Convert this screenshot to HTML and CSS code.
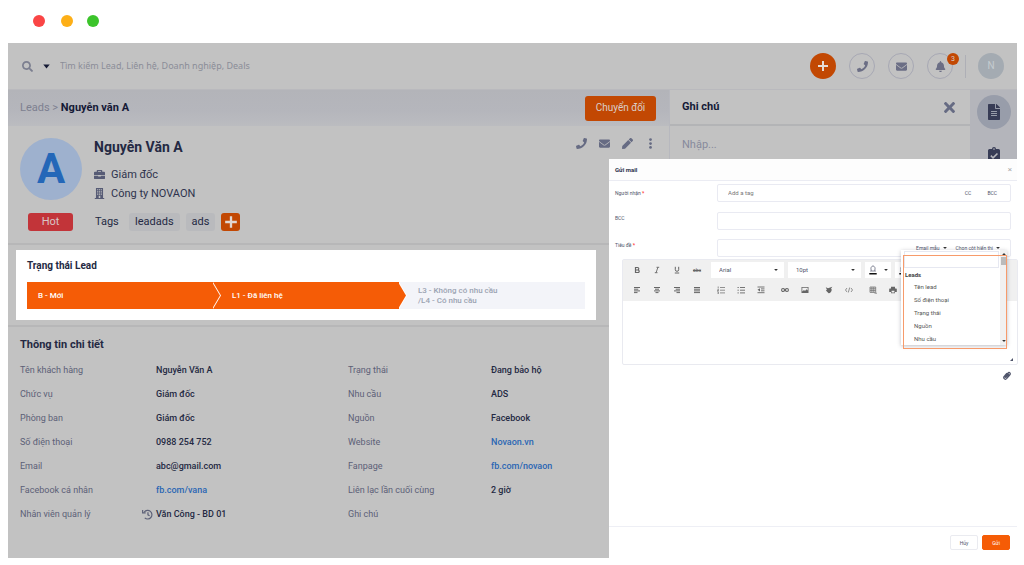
FILE: index.html
```html
<!DOCTYPE html>
<html lang="vi">
<head>
<meta charset="utf-8">
<meta name="viewport" content="width=device-width, initial-scale=1">
<title>Nguyễn Văn A - Leads</title>
<link rel="stylesheet" href="styles.css">
</head>
<body>
<svg class="sprite" aria-hidden="true">
  <symbol id="search" viewBox="0 0 512 512"><path d="M505 442.7L405.3 343c-4.5-4.5-10.6-7-17-7H372c27.6-35.3 44-79.7 44-128C416 93.1 322.9 0 208 0S0 93.1 0 208s93.1 208 208 208c48.3 0 92.7-16.4 128-44v16.3c0 6.4 2.5 12.5 7 17l99.7 99.7c9.4 9.4 24.6 9.4 33.9 0l28.3-28.3c9.4-9.4 9.4-24.6.1-34zM208 336c-70.7 0-128-57.2-128-128 0-70.7 57.2-128 128-128 70.7 0 128 57.2 128 128 0 70.7-57.2 128-128 128z"/></symbol>
  <symbol id="phone" viewBox="0 0 512 512"><path d="M493.4 24.6l-104-24c-11.3-2.6-22.9 3.3-27.5 13.9l-48 112c-4.2 9.8-1.4 21.3 6.9 28l60.6 49.6c-36 76.7-98.9 140.5-177.2 177.2l-49.6-60.6c-6.8-8.3-18.2-11.1-28-6.9l-112 48C3.9 366.5-2 378.1.6 389.4l24 104C27.1 504.2 36.7 512 48 512c256.1 0 464-207.5 464-464 0-11.2-7.7-20.9-18.6-23.4z"/></symbol>
  <symbol id="mail" viewBox="0 0 512 512"><path d="M502.3 190.8c3.9-3.1 9.7-.2 9.7 4.7V400c0 26.5-21.5 48-48 48H48c-26.5 0-48-21.5-48-48V195.6c0-5 5.7-7.8 9.7-4.7 22.4 17.4 52.1 39.5 154.1 113.6 21.1 15.4 56.7 47.8 92.2 47.6 35.7.3 72-32.8 92.3-47.6 102-74.1 131.6-96.3 154-113.7zM256 320c23.2.4 56.6-29.2 73.4-41.4 132.7-96.3 142.8-104.7 173.4-128.7 5.8-4.5 9.2-11.5 9.2-18.9v-19c0-26.5-21.5-48-48-48H48c-26.5 0-48 21.5-48 48v19c0 7.4 3.4 14.3 9.2 18.9 30.6 23.9 40.7 32.4 173.4 128.7 16.8 12.2 50.2 41.8 73.4 41.4z"/></symbol>
  <symbol id="bell" viewBox="0 0 448 512"><path d="M224 512c35.32 0 63.97-28.65 63.97-64H160.03c0 35.35 28.65 64 63.97 64zm215.39-149.71c-19.32-20.76-55.47-51.99-55.47-154.29 0-77.7-54.48-139.9-127.94-155.16V32c0-17.67-14.32-32-31.98-32s-31.98 14.33-31.98 32v20.84C118.56 68.1 64.08 130.3 64.08 208c0 102.3-36.15 133.53-55.47 154.29-6 6.45-8.66 14.16-8.61 21.71.11 16.4 12.98 32 32.1 32h383.8c19.12 0 32-15.6 32.1-32 .05-7.55-2.61-15.27-8.61-21.71z"/></symbol>
  <symbol id="times" viewBox="0 80 352 352"><path d="M242.72 256l100.07-100.07c12.28-12.28 12.28-32.19 0-44.48l-22.24-22.24c-12.28-12.28-32.19-12.28-44.48 0L176 189.28 75.93 89.21c-12.28-12.28-32.19-12.28-44.48 0L9.21 111.45c-12.28 12.28-12.28 32.19 0 44.48L109.28 256 9.21 356.07c-12.28 12.28-12.28 32.19 0 44.48l22.24 22.24c12.28 12.28 32.2 12.28 44.48 0L176 322.72l100.07 100.07c12.28 12.28 32.2 12.28 44.48 0l22.24-22.24c12.28-12.28 12.28-32.19 0-44.48L242.72 256z"/></symbol>
  <symbol id="pen" viewBox="0 0 512 512"><path d="M290.74 93.24l128.02 128.02-277.99 277.99-114.14 12.6C11.35 513.54-1.56 500.62.14 485.34l12.7-114.22 277.9-277.88zm207.2-19.06l-60.11-60.11c-18.75-18.75-49.16-18.75-67.91 0l-56.55 56.55 128.02 128.02 56.55-56.55c18.75-18.76 18.75-49.16 0-67.91z"/></symbol>
  <symbol id="file" viewBox="0 0 384 512"><path d="M224 136V0H24C10.700 0 0 10.700 0 24v464c0 13.300 10.700 24 24 24h336c13.300 0 24-10.700 24-24V160H248c-13.200 0-24-10.800-24-24zm64 236c0 6.600-5.400 12-12 12H108c-6.600 0-12-5.400-12-12v-8c0-6.600 5.400-12 12-12h168c6.600 0 12 5.400 12 12v8zm0-64c0 6.600-5.400 12-12 12H108c-6.600 0-12-5.400-12-12v-8c0-6.600 5.400-12 12-12h168c6.600 0 12 5.400 12 12v8zm0-72v8c0 6.600-5.400 12-12 12H108c-6.600 0-12-5.400-12-12v-8c0-6.600 5.400-12 12-12h168c6.600 0 12 5.400 12 12zm96-114.100v6.100H256V0h6.100c6.400 0 12.500 2.500 17 7l97.900 98c4.500 4.500 7 10.600 7 16.900z"/></symbol>
  <symbol id="clipboard" viewBox="0 0 12 16"><path fill-rule="evenodd" d="M1.500 2H4a2 2 0 0 1 4 0h2.500Q12 2 12 3.500v11Q12 16 10.500 16h-9Q0 16 0 14.500v-11Q0 2 1.500 2zM6 1.300a.8.8 0 1 0 0 1.600.8.8 0 0 0 0-1.600zM2.300 9.200L5 12l5-5-1.100-1.100L5 9.800 3.400 8.100z"/></symbol>
  <symbol id="plus" viewBox="0 0 12 12"><path d="M5 1h2v4h4v2H7v4H5V7H1V5h4z"/></symbol>
  <symbol id="more" viewBox="0 0 4 12"><circle cx="2" cy="1.700" r="1.500"/><circle cx="2" cy="6" r="1.500"/><circle cx="2" cy="10.300" r="1.500"/></symbol>
  <symbol id="case" viewBox="0 0 12 12"><path fill-rule="evenodd" d="M3 3V1.700Q3 1 3.700 1h4.600Q9 1 9 1.700V3h2q1 0 1 1v2.500H0V4q0-1 1-1zm1.400 0h3.200v-.7H4.400zM0 7.300h4.500v1h3v-1H12V10q0 1-1 1H1q-1 0-1-1z"/></symbol>
  <symbol id="building" viewBox="0 0 12 14"><path fill-rule="evenodd" d="M1.500 0h9v12.800H12V14H0v-1.200h1.500zM3 1.500V3h1.400V1.500zm2.300 0V3h1.400V1.500zm2.300 0V3H9V1.500zM3 4.200v1.500h1.400V4.200zm2.300 0v1.500h1.400V4.200zm2.300 0v1.500H9V4.200zM3 7v1.500h1.400V7zm2.300 0v1.500h1.400V7zm2.300 0v1.500H9V7zM5 10v2.800h2V10z"/></symbol>
  <symbol id="history" viewBox="0 0 12 12"><path d="M2.500 3.200A4.700 4.700 0 1 1 3 9.700M.7 1v3.200H4M6.500 3.600v2.800l1.800 1" fill="none" stroke="currentColor" stroke-width="1.300"/></symbol>
  <symbol id="caret" viewBox="0 0 8 5"><path d="M.3.300h7.400L4 4.700z"/></symbol>
  <symbol id="bold" viewBox="0 0 8 8"><path d="M2.500 1.500h2q1.300 0 1.300 1.200T4.500 4h-2zm0 2.500h2.300q1.400 0 1.400 1.300T4.800 6.500H2.500z" fill="none" stroke="currentColor" stroke-width="1.200"/></symbol>
  <symbol id="italic" viewBox="0 0 8 8"><path d="M3.500 1.300h2.700M1.800 6.700h2.700M4.900 1.300L3.100 6.700" fill="none" stroke="currentColor" stroke-width=".9"/></symbol>
  <symbol id="underline" viewBox="0 0 8 8"><path d="M2.300.8v2.900q0 1.600 1.700 1.600t1.700-1.600V.8M1.800 7h4.400" fill="none" stroke="currentColor" stroke-width="1"/></symbol>
  <symbol id="left" viewBox="0 0 8 8"><path d="M1 1.500h6M1 3.200h4.300M1 4.900h6M1 6.600h3.500" fill="none" stroke="currentColor"/></symbol>
  <symbol id="center" viewBox="0 0 8 8"><path d="M1 1.500h6M2 3.200h4M1 4.900h6M2.500 6.600h3" fill="none" stroke="currentColor"/></symbol>
  <symbol id="right" viewBox="0 0 8 8"><path d="M1 1.500h6M2.700 3.200H7M1 4.900h6M3.500 6.600H7" fill="none" stroke="currentColor"/></symbol>
  <symbol id="justify" viewBox="0 0 8 8"><path d="M1 1.500h6M1 3.200h6M1 4.900h6M1 6.600h6" fill="none" stroke="currentColor"/></symbol>
  <symbol id="numbers" viewBox="0 0 8 8"><path d="M3 1.500h5M3 4.200h5M3 6.900h5M1.200.5v2M.5 3.500h1v1h-1v.8h1M.5 6.300h1v1.300h-1" fill="none" stroke="currentColor" stroke-width=".7"/></symbol>
  <symbol id="bullets" viewBox="0 0 8 8"><path d="M3 1.500h5M3 4.200h5M3 6.900h5M.5 1.500h1.300M.5 4.200h1.300M.5 6.900h1.300" fill="none" stroke="currentColor" stroke-width=".9"/></symbol>
  <symbol id="indent" viewBox="0 0 8 8"><path d="M.5 1h7M4 2.900h3.500M4 4.800h3.500M.5 6.700h7" fill="none" stroke="currentColor" stroke-width=".9"/><path d="M.5 3.800L3 2.200v3.300z"/></symbol>
  <symbol id="link" viewBox="0 0 8 8"><rect x=".6" y="2.500" width="3" height="3" rx="1.400" fill="none" stroke="currentColor" stroke-width="1.100"/><rect x="4.400" y="2.500" width="3" height="3" rx="1.400" fill="none" stroke="currentColor" stroke-width="1.100"/><path d="M2.500 3.600h3v.8h-3z"/></symbol>
  <symbol id="image" viewBox="0 0 8 8"><path fill-rule="evenodd" d="M.5 1h7v6h-7zm.8.800v3.700L3 4l1 .9 1.500-1.700 1.200 1.300V1.800z"/></symbol>
  <symbol id="brush" viewBox="0 0 8 8"><path d="M.8 1.200L3 2.300 7.300.8 5.900 3l1 .6-.7 2L5 7 3.600 7.300.9 4.500l1-.8z"/></symbol>
  <symbol id="code" viewBox="0 0 8 8"><path d="M2 2L.5 4 2 6M6 2l1.500 2L6 6M4.700 1.500l-1.400 5" fill="none" stroke="currentColor" stroke-width=".7"/></symbol>
  <symbol id="table" viewBox="0 0 8 8"><path d="M1 1h5.700v5.400H1zM1 2.800h5.700M1 4.600h5.700M2.900 1v5.400M4.800 1v5.400M5.500 7.200H8" fill="none" stroke="currentColor" stroke-width=".7"/></symbol>
  <symbol id="print" viewBox="0 0 8 8"><path fill-rule="evenodd" d="M2 .8h4v1.700h1.200q.6 0 .6.600V6H6v1.300H2V6H.2V3.100q0-.6.6-.6H2zM2.600 4.800v1.800h2.800V4.800z"/></symbol>
  <symbol id="drop" viewBox="0 0 8 10"><path d="M2.300 5.500Q1 2 4 .8 7 2 5.700 5.500L6.500 6h-5z" fill="none" stroke="currentColor" stroke-width=".7"/><path d="M.3 8h7.400v1.500H.3z" fill="#111"/></symbol>
  <symbol id="clip" viewBox="0 0 8 9"><path d="M5.800 3L3.100 6.100q-.6.600-1-.1L4.700 2.500Q6 .8 6.900 1.900T6.500 4.300L3.800 7.400Q2.300 9 1.200 7.700T1.600 5L4 2.200" fill="none" stroke="currentColor" stroke-width="1.300"/></symbol>
  <symbol id="corner" viewBox="0 0 4 4"><path d="M4 0v4H0z"/></symbol>
</svg>

<div class="window-dots"><i class="dot dot-red"></i><i class="dot dot-yellow"></i><i class="dot dot-green"></i></div>

<div class="app">
  <header class="topbar">
    <form class="search" role="search">
      <svg class="icon icon-search"><use href="#search"/></svg>
      <button class="plain" type="button" aria-label="Phạm vi tìm kiếm"><svg class="icon icon-caret"><use href="#caret"/></svg></button>
      <input class="search-input" type="text" aria-label="Tìm kiếm" placeholder="Tìm kiếm Lead, Liên hệ, Doanh nghiệp, Deals">
    </form>
    <div class="top-actions">
      <div class="top-buttons">
        <button class="round round-add" type="button" aria-label="Thêm"><svg class="icon icon-12"><use href="#plus"/></svg></button>
        <button class="round" type="button" aria-label="Gọi"><svg class="icon icon-11"><use href="#phone"/></svg></button>
        <button class="round" type="button" aria-label="Mail"><svg class="icon icon-11"><use href="#mail"/></svg></button>
        <button class="round" type="button" aria-label="Thông báo"><svg class="icon icon-11"><use href="#bell"/></svg><span class="badge">3</span></button>
      </div>
      <span class="divider"></span>
      <button class="round round-user" type="button">N</button>
    </div>
  </header>

  <div class="workspace">
    <main class="lead">
      <div class="crumbs">
        <nav class="path"><a href="#">Leads</a> &gt; <strong>Nguyễn văn A</strong></nav>
        <button class="convert" type="button">Chuyển đổi</button>
      </div>

      <section class="profile">
        <div class="person">
          <div class="avatar">A</div>
          <div class="facts">
            <h1 class="name">Nguyễn Văn A</h1>
            <p class="fact"><svg class="icon icon-11"><use href="#case"/></svg>Giám đốc</p>
            <p class="fact"><svg class="icon icon-11"><use href="#building"/></svg>Công ty NOVAON</p>
          </div>
          <div class="tools">
            <button class="plain" type="button" aria-label="Gọi"><svg class="icon icon-11"><use href="#phone"/></svg></button>
            <button class="plain" type="button" aria-label="Gửi mail"><svg class="icon icon-11"><use href="#mail"/></svg></button>
            <button class="plain" type="button" aria-label="Sửa"><svg class="icon icon-11"><use href="#pen"/></svg></button>
            <button class="plain" type="button" aria-label="Khác"><svg class="icon icon-11"><use href="#more"/></svg></button>
          </div>
        </div>
        <div class="tags">
          <span class="hot">Hot</span>
          <span class="tags-label">Tags</span>
          <span class="tag">leadads</span>
          <span class="tag">ads</span>
          <button class="tag-add" type="button" aria-label="Thêm tag"><svg class="icon icon-14"><use href="#plus"/></svg></button>
        </div>
      </section>

      <section class="status">
        <div class="status-card">
          <h2 class="status-title">Trạng thái Lead</h2>
          <ol class="steps">
            <li class="step step-done">B - Mới</li>
            <li class="step step-done">L1 - Đã liên hệ</li>
            <li class="step">L3 - Không có nhu cầu<br>/L4 - Có nhu cầu</li>
          </ol>
        </div>
      </section>

      <section class="details">
        <h2 class="details-title">Thông tin chi tiết</h2>
        <dl class="fields">
          <dt>Tên khách hàng</dt><dd>Nguyễn Văn A</dd><dt>Trạng thái</dt><dd>Đang bảo hộ</dd>
          <dt>Chức vụ</dt><dd>Giám đốc</dd><dt>Nhu cầu</dt><dd>ADS</dd>
          <dt>Phòng ban</dt><dd>Giám đốc</dd><dt>Nguồn</dt><dd>Facebook</dd>
          <dt>Số điện thoại</dt><dd>0988 254 752</dd><dt>Website</dt><dd><a href="#">Novaon.vn</a></dd>
          <dt>Email</dt><dd>abc@gmail.com</dd><dt>Fanpage</dt><dd><a href="#">fb.com/novaon</a></dd>
          <dt>Facebook cá nhân</dt><dd><a href="#">fb.com/vana</a></dd><dt>Liên lạc lần cuối cùng</dt><dd>2 giờ</dd>
          <dt>Nhân viên quản lý</dt><dd class="owner"><svg class="icon icon-11"><use href="#history"/></svg>Văn Công - BD 01</dd><dt>Ghi chú</dt><dd></dd>
        </dl>
      </section>
    </main>

    <aside class="notes">
      <div class="notes-head"><label for="note">Ghi chú</label><button class="plain" type="button" aria-label="Đóng ghi chú"><svg class="icon icon-11"><use href="#times"/></svg></button></div>
      <input class="notes-input" id="note" type="text" placeholder="Nhập...">
    </aside>

    <nav class="rail">
      <button class="rail-button rail-active" type="button" aria-label="Ghi chú"><svg class="icon icon-16"><use href="#file"/></svg></button>
      <button class="rail-button" type="button" aria-label="Công việc"><svg class="icon icon-16"><use href="#clipboard"/></svg></button>
    </nav>
  </div>

  <form class="modal" role="dialog" aria-labelledby="mail-title">
    <header class="modal-head"><h2 class="modal-title" id="mail-title">Gửi mail</h2><button class="modal-close" type="button" aria-label="Đóng">×</button></header>
    <div class="rows">
      <div class="row">
        <label class="label-first" for="to">Người nhận <b class="must">*</b></label>
        <div class="box"><input class="box-input" id="to" type="text" placeholder="Add a tag"><button class="box-button" type="button">CC</button><button class="box-button" type="button">BCC</button></div>
      </div>
      <div class="row">
        <label for="bcc">BCC</label>
        <div class="box"><input class="box-input" id="bcc" type="text"></div>
      </div>
      <div class="row row-subject">
        <label for="subject">Tiêu đề <b class="must">*</b></label>
        <div class="box box-subject"><input class="box-input" id="subject" type="text"><button class="menu-button" type="button">Email mẫu <svg class="icon icon-tiny"><use href="#caret"/></svg></button><button class="menu-button" type="button">Chọn cột hiển thị <svg class="icon icon-tiny"><use href="#caret"/></svg></button></div>
        <div class="picker">
          <div class="picker-main">
            <input class="picker-search" type="text" aria-label="Tìm cột">
            <h3 class="picker-group">Leads</h3>
            <ul class="picker-list"><li>Tên lead</li><li>Số điện thoại</li><li>Trạng thái</li><li>Nguồn</li><li>Nhu cầu</li></ul>
          </div>
          <div class="scroll"><svg class="icon icon-tiny flip"><use href="#caret"/></svg><span class="thumb"></span><svg class="icon icon-tiny"><use href="#caret"/></svg></div>
          <div class="picker-frame"></div>
        </div>
      </div>
    </div>

    <div class="editor">
      <div class="bar">
        <div class="bar-row">
          <div class="group">
            <button class="cmd" type="button" aria-label="Đậm"><svg class="icon icon-8"><use href="#bold"/></svg></button>
            <button class="cmd" type="button" aria-label="Nghiêng"><svg class="icon icon-8"><use href="#italic"/></svg></button>
            <button class="cmd" type="button" aria-label="Gạch chân"><svg class="icon icon-8"><use href="#underline"/></svg></button>
            <button class="cmd cmd-strike" type="button">abc</button>
          </div>
          <span class="select-wrap"><select class="select" aria-label="Phông chữ"><option>Arial</option></select><svg class="icon icon-tiny"><use href="#caret"/></svg></span>
          <span class="select-wrap"><select class="select" aria-label="Cỡ chữ"><option>10pt</option></select><svg class="icon icon-tiny"><use href="#caret"/></svg></span>
          <button class="color" type="button" aria-label="Màu chữ"><svg class="icon icon-color"><use href="#drop"/></svg><svg class="icon icon-tiny"><use href="#caret"/></svg></button>
          <button class="color" type="button" aria-label="Màu nền"><svg class="icon icon-color"><use href="#drop"/></svg><svg class="icon icon-tiny"><use href="#caret"/></svg></button>
        </div>
        <div class="bar-row">
          <div class="group">
            <button class="cmd" type="button" aria-label="Căn trái"><svg class="icon icon-8"><use href="#left"/></svg></button>
            <button class="cmd" type="button" aria-label="Căn giữa"><svg class="icon icon-8"><use href="#center"/></svg></button>
            <button class="cmd" type="button" aria-label="Căn phải"><svg class="icon icon-8"><use href="#right"/></svg></button>
            <button class="cmd" type="button" aria-label="Căn đều"><svg class="icon icon-8"><use href="#justify"/></svg></button>
          </div>
          <div class="group">
            <button class="cmd" type="button" aria-label="Danh sách số"><svg class="icon icon-8"><use href="#numbers"/></svg></button>
            <button class="cmd" type="button" aria-label="Danh sách"><svg class="icon icon-8"><use href="#bullets"/></svg></button>
            <button class="cmd" type="button" aria-label="Thụt lề"><svg class="icon icon-8"><use href="#indent"/></svg></button>
          </div>
          <div class="group">
            <button class="cmd" type="button" aria-label="Liên kết"><svg class="icon icon-8"><use href="#link"/></svg></button>
            <button class="cmd" type="button" aria-label="Hình ảnh"><svg class="icon icon-8"><use href="#image"/></svg></button>
          </div>
          <div class="group">
            <button class="cmd" type="button" aria-label="Xóa định dạng"><svg class="icon icon-8"><use href="#brush"/></svg></button>
            <button class="cmd" type="button" aria-label="Mã nguồn"><svg class="icon icon-8"><use href="#code"/></svg></button>
          </div>
          <div class="group">
            <button class="cmd" type="button" aria-label="Bảng"><svg class="icon icon-8"><use href="#table"/></svg></button>
            <button class="cmd" type="button" aria-label="In"><svg class="icon icon-8"><use href="#print"/></svg></button>
          </div>
        </div>
      </div>
      <textarea class="body-text" aria-label="Nội dung"></textarea>
      <svg class="icon icon-corner"><use href="#corner"/></svg>
    </div>
    <div class="attach"><button class="plain" type="button" aria-label="Đính kèm"><svg class="icon icon-clip"><use href="#clip"/></svg></button></div>
    <footer class="modal-foot"><button class="foot-button" type="button">Hủy</button><button class="foot-button foot-send" type="submit">Gửi</button></footer>
  </form>
</div>
</body>
</html>
```
FILE: styles.css
```css
* { box-sizing: border-box; }

body {
  margin: 0;
  min-height: 100vh;
  display: flex;
  flex-direction: column;
  padding: 0 7px 7px 8px;
  background: #fff;
  color: #242943;
  font: 10px/16px Roboto, sans-serif;
}

h1, h2, h3, p, ol, ul, dl, dd { margin: 0; padding: 0; }
ol, ul { list-style: none; }
a { color: inherit; text-decoration: none; }
button, input, select, textarea { font: inherit; color: inherit; margin: 0; padding: 0; border: 0; background: none; }
input, textarea { min-width: 0; outline: 0; }
.sprite { position: absolute; width: 0; height: 0; }

.icon { display: block; flex: none; fill: currentColor; }
.icon-8 { width: 8px; height: 8px; }
.icon-11 { width: 11px; height: 11px; }
.icon-12 { width: 12px; height: 12px; }
.icon-14 { width: 14px; height: 14px; }
.icon-16 { width: 16px; height: 16px; }
.icon-search { width: 11px; height: 11px; color: #7c7f90; }
.icon-caret { width: 7px; height: 5px; color: #151a35; }
.icon-tiny { width: 4px; height: 4px; color: #333; }
.icon-color { width: 8px; height: 10px; }
.icon-clip { width: 8px; height: 9px; }
.flip { transform: rotate(180deg); }
.plain { display: flex; align-items: center; }

.window-dots { display: flex; align-items: center; height: 43px; padding: 0 25px 2px; }
.dot { width: 12px; height: 12px; border-radius: 50%; }
.dot-red { background: #fa4545; }
.dot-yellow { margin-left: 16px; background: #fdaf17; }
.dot-green { margin-left: 14px; background: #3cc42b; }

.app { position: relative; flex: 1; display: flex; flex-direction: column; background: #c2c2c2; }

/* Top bar */
.topbar { display: flex; align-items: center; justify-content: space-between; height: 47px; padding: 0 13px 0 14px; border-bottom: 1px solid #b9b9bd; }
.search { flex: 1; display: flex; align-items: center; gap: 10px; }
.search-input { flex: 1; max-width: 400px; font: 9px/16px "Noto Sans", sans-serif; }
.search-input::placeholder { color: #8b8d98; opacity: 1; }
.top-actions { display: flex; align-items: center; gap: 12px; }
.top-buttons { display: flex; gap: 13px; }
.round { position: relative; width: 26px; height: 26px; display: flex; align-items: center; justify-content: center; border: 1px solid #a7a8b4; border-radius: 50%; color: #6b6e85; }
.round-add { border: 0; background: #c24803; color: #e6ddd8; }
.round-user { border: 0; background: #a4abb2; color: #c5cbd0; }
.badge { position: absolute; top: -1px; right: -7px; width: 12px; height: 12px; border-radius: 50%; background: #c24803; color: #d9cfc9; font-size: 7px; line-height: 12px; text-align: center; }
.divider { width: 1px; height: 23px; background: #aeafb6; }

.workspace { flex: 1; display: flex; }
.lead { flex: 1; min-width: 0; }

/* Breadcrumb */
.crumbs { display: flex; align-items: center; justify-content: space-between; height: 36px; padding: 0 13px 0 12px; background: linear-gradient(#b3b4b9, #b5b6bc 60%, #bbbcc0); color: #7d8090; font-size: 11px; }
.path strong { color: #141936; }
.convert { width: 71px; height: 25px; border-radius: 3px; background: #c24803; color: #d9cfca; font-size: 10px; }

/* Profile */
.profile { padding: 11px 13px 0 12px; height: 119px; border-bottom: 2px solid #b7b7b8; }
.person { display: flex; height: 66px; }
.avatar { width: 62px; height: 62px; margin-top: 1px; border-radius: 50%; background: #9eb1ce; color: #2467b8; font-size: 42px; font-weight: 700; line-height: 62px; text-align: center; }
.facts { flex: 1; padding-left: 12px; }
.name { padding-bottom: 8px; font-size: 14px; line-height: 20px; }
.fact { display: flex; align-items: center; gap: 6px; font-size: 11px; line-height: 19px; color: #2e334d; }
.fact .icon { color: #565b75; }
.tools { display: flex; align-items: flex-start; gap: 12px; padding-top: 1px; color: #666b83; }
.tags { display: flex; align-items: center; gap: 6px; height: 18px; padding-left: 8px; margin-top: 10px; font-size: 11px; line-height: 18px; }
.hot { width: 45px; border-radius: 3px; background: #c23439; color: #d8c5c6; text-align: center; }
.tags-label { width: 44px; padding-left: 16px; }
.tag { padding: 0 6px; border-radius: 3px; background: #b9babd; }
.tag-add { display: flex; align-items: center; justify-content: center; width: 19px; height: 18px; border-radius: 3px; background: #c24803; color: #e1d7d1; }

/* Status */
.status { height: 82px; padding: 5px 8px; border-bottom: 2px solid #b7b7b8; }
.status-card { max-width: 580px; height: 70px; padding: 8px 11px; background: #fff; }
.status-title { padding-bottom: 8px; font-size: 10px; line-height: 16px; }
.steps { display: grid; grid-template-columns: repeat(3, 1fr); }
.step { position: relative; height: 27px; display: flex; align-items: center; padding-left: 19px; background: #f3f4f9; color: #9ba3b2; font-size: 8px; line-height: 10px; font-weight: 500; }
.step:first-child { padding-left: 11px; }
.step-done { background: #f55c06; color: #fff; }
.step-done::before, .step-done::after { content: ""; position: absolute; z-index: 1; top: 0; left: 100%; width: 8px; height: 27px; clip-path: polygon(0 0, 100% 50%, 0 100%); background: #fff; }
.step-done::after { left: calc(100% - 1px); background: #f55c06; }

/* Details */
.details { padding: 10px 12px; }
.details-title { padding-bottom: 5px; font-size: 11px; line-height: 16px; }
.fields { display: grid; grid-template-columns: 136fr 192fr 143fr 166fr; font-size: 9px; line-height: 24px; }
.fields dt { color: #5c6077; }
.fields dd { font-weight: 500; }
.fields a { color: #2a66b4; }
.fields .owner { display: flex; align-items: center; gap: 3px; margin-left: -14px; }
.owner .icon { color: #5c6077; }

/* Notes */
.notes { width: 301px; border-left: 1px solid #b7b8be; }
.notes-head { display: flex; align-items: center; justify-content: space-between; height: 36px; padding: 0 15px 0 12px; border-bottom: 2px solid #b3b4b6; font-size: 11px; font-weight: 700; color: #141936; }
.notes-head .icon { color: #666b83; }
.notes-input { width: 100%; height: 36px; padding: 0 12px; font-size: 11px; }
.notes-input::placeholder { color: #878a9c; opacity: 1; }

/* Rail */
.rail { width: 47px; display: flex; flex-direction: column; align-items: center; gap: 9px; padding-top: 5px; background: #b4b5bb; }
.rail-button { width: 34px; height: 34px; display: flex; align-items: center; justify-content: center; border-radius: 50%; color: #373c56; }
.rail-active { background: #989daa; }

/* Mail dialog */
.modal { position: absolute; z-index: 2; top: 116px; right: 0; bottom: 0; width: 408px; display: flex; flex-direction: column; background: #fff; font-size: 5px; line-height: 10px; color: #50556b; }
.modal-head { display: flex; align-items: center; justify-content: space-between; height: 22px; padding: 0 5px 0 6px; border-bottom: 1px solid #ebecf3; background: #fdfdfd; }
.modal-title { font-size: 6px; color: #2b304a; }
.modal-close { font-size: 8px; color: #aaa; }
.rows { display: grid; gap: 10px; padding: 3px 6px 0; }
.row { position: relative; display: flex; }
.row-subject { margin-top: -1px; }
.row label { width: 102px; padding-top: 1px; }
.row .label-first { padding-top: 4px; }
.must { color: #f33; }
.box { flex: 1; height: 18px; display: flex; align-items: center; gap: 16px; padding: 0 13px 0 10px; border: 1px solid #e9eaf2; border-radius: 2px; }
.box-input { flex: 1; font-size: 6px; }
.box-input::placeholder { color: #777; opacity: 1; }
.box-subject { gap: 9px; padding-right: 10px; }
.menu-button { display: flex; align-items: center; gap: 3px; }

/* Column picker */
.picker { position: absolute; z-index: 3; top: 11px; right: 4px; width: 106px; height: 95px; display: flex; background: #fff; box-shadow: 0 1px 4px rgba(40, 40, 60, .3); }
.picker-main { flex: 1; padding: 1px 1px 0 3px; }
.picker-search { display: block; width: 100%; height: 17px; border: 1px solid #e6e8f1; }
.picker-group { padding: 2px 0 0 1px; font-size: 6px; line-height: 10px; color: #444; }
.picker-list { padding-left: 10px; font-size: 6px; line-height: 13px; color: #555; }
.scroll { width: 7px; display: flex; flex-direction: column; align-items: center; padding: 2px 0; background: #f1f1f1; }
.thumb { width: 5px; height: 8px; margin: 1px 0 auto; background: #bbb; }
.picker-frame { position: absolute; inset: 5px 0 -4px 2px; border: 1px solid #f79b6b; pointer-events: none; }

/* Editor */
.editor { position: relative; margin: 2px -1px 0 13px; border: 1px solid #e9eaf0; border-radius: 2px; font-size: 6px; }
.bar { padding: 0 4px 1px; background: #f0f0f0; }
.bar-row { display: flex; align-items: center; gap: 4px; height: 20px; }
.group { display: flex; }
.cmd { width: 20px; height: 16px; display: flex; align-items: center; justify-content: center; color: #666; }
.cmd-strike { font-size: 5px; text-decoration: line-through; }
.select-wrap { position: relative; display: flex; align-items: center; width: 73px; height: 16px; background: #fff; }
.select-wrap .icon { position: absolute; right: 6px; pointer-events: none; }
.select { width: 100%; height: 16px; padding-left: 8px; appearance: none; }
.color { width: 26px; height: 16px; display: flex; align-items: center; justify-content: space-around; background: #fff; }
.body-text { display: block; width: 100%; height: 63px; resize: none; }
.icon-corner { position: absolute; right: 4px; bottom: 3px; width: 3px; height: 3px; }
.attach { display: flex; justify-content: flex-end; padding: 6px; }
.modal-foot { display: flex; justify-content: flex-end; gap: 4px; margin-top: auto; padding: 8px 7px; border-top: 1px solid #eeeff5; }
.foot-button { width: 28px; height: 15px; border: 1px solid #eaebf0; border-radius: 2px; }
.foot-send { border-color: #f55c06; background: #f55c06; color: #fff; }
```
